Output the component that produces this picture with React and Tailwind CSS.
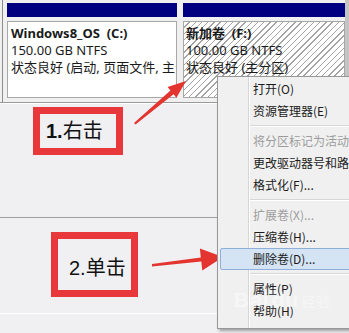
import React from 'react';

const menuItems = [
    { label: '打开(O)' },
    { label: '资源管理器(E)' },
    { sep: true },
    { label: '将分区标记为活动分区(M)', disabled: true },
    { label: '更改驱动器号和路径(C)...' },
    { label: '格式化(F)...' },
    { sep: true },
    { label: '扩展卷(X)...', disabled: true },
    { label: '压缩卷(H)...' },
    { label: '删除卷(D)...', active: true },
    { sep: true },
    { label: '属性(P)' },
    { label: '帮助(H)' },
];

const Partition = ({ outer, inner, title, size, status }) => (
    <div className={`flex flex-col pt-[3px] ${outer}`}>
        <div className="h-[14px] bg-[#000080]" />
        <div className="flex-1 pt-[4px] pb-[4px]">
            <div className={`h-full border border-[#a8a8a8] overflow-hidden whitespace-nowrap text-[13px] leading-[17px] text-[#1a1a1a] pt-[3px] ${inner}`}>
                <div className="font-bold">{title}</div>
                <div>{size}</div>
                <div>{status}</div>
            </div>
        </div>
    </div>
);

const Arrows = () => (
    <svg className="absolute inset-0 pointer-events-none" width="349" height="333" viewBox="0 0 349 333">
        <polygon
            fill="#e3342f"
            points="134,123 170.4,90.4 167.6,86.9 186,81 176.4,97.8 173.6,94.2 135.5,124.5"
        />
        <polygon
            fill="#e3342f"
            points="152,264 200.8,257.5 199.9,248.6 223,257 202.3,270.4 201.3,261.5 152,266.5"
        />
    </svg>
);

export default function App() {
    return (
        <div
            className="relative w-[349px] h-[333px] overflow-hidden bg-[#f0eff2]"
            style={{ fontFamily: '"Noto Sans", "Noto Sans CJK SC", sans-serif' }}
        >
            {/* disk row */}
            <div className="flex h-[103px] bg-[#f0f0f0] border-b border-[#9a9a9a]">
                <div className="w-[3px] border-r border-[#8c8c8c]" />
                <Partition
                    outer="w-[174px] pl-[4px]"
                    inner="bg-white pl-[3px]"
                    title={'Windows8_OS\u00a0\u00a0(C:)'}
                    size="150.00 GB NTFS"
                    status="状态良好 (启动, 页面文件, 主分区)"
                />
                <div className="w-[3px]" />
                <Partition
                    outer="w-[165px] pl-[3px]"
                    inner="bg-[image:repeating-linear-gradient(135deg,#ffffff_0px,#ffffff_3.4px,#a4a4a4_3.4px,#a4a4a4_4.4px)] pl-[2px]"
                    title={'新加卷\u00a0\u00a0(F:)'}
                    size="100.00 GB NTFS"
                    status="状态良好 (主分区)"
                />
                <div className="flex-1 bg-[#c4c4c4]" />
            </div>

            {/* lower area */}
            <div className="border-t border-white" style={{ fontFamily: '"Liberation Sans", "Noto Sans CJK SC", sans-serif' }}>
                <div className="h-[114px] pt-[3px] pl-[33px] border-b border-[#a0a0a0]">
                    <div className="w-[90px] h-[48px] border-[7px] border-[#e8383b] flex items-center pl-[6px] text-[20px] text-[#111]">
                        <span className="font-bold">1.</span>
                        <span>右击</span>
                    </div>
                </div>
                <div className="h-[96px] pt-[14px] pl-[51px] border-b border-white">
                    <div className="w-[87px] h-[65px] border-[7px] border-[#e8383b] flex items-center pl-[11px] pt-[6px] text-[20px] text-[#111]">
                        <span>2.</span>
                        <span>单击</span>
                    </div>
                </div>
            </div>

            <Arrows />

            {/* context menu */}
            <div
                className="absolute left-[217px] top-[76px] w-[190px] bg-[#f0f0f0] border border-[#979797] shadow-[2px_2px_3px_rgba(0,0,0,0.35)] pt-[1px] pb-[6px] text-[12px] whitespace-nowrap"
                style={{ fontFamily: '"Noto Sans CJK SC", "Noto Sans", sans-serif' }}
            >
                <div className="absolute left-[30px] top-0 bottom-0 w-[2px] border-l border-[#d6d6d6] bg-white" />
                {menuItems.map((item, i) =>
                    item.sep ? (
                        <div key={i} className="h-[8px] flex items-center pl-[32px]">
                            <div className="w-full h-[2px] border-t border-[#d6d6d6] bg-white" />
                        </div>
                    ) : (
                        <div key={i} className="relative h-[22px] px-[2px]">
                            <div
                                className={`h-full flex items-center pl-[32px] rounded-[2px] border ${
                                    item.active ? 'bg-[#d5e4f4] border-[#8fb0da]' : 'border-transparent'
                                } ${item.disabled ? 'text-[#9d9d9d]' : 'text-[#1b1b1b]'}`}
                            >
                                {item.label}
                            </div>
                        </div>
                    )
                )}
                <div className="absolute left-[16px] top-[212px] text-[21px] leading-[22px] font-bold text-white/45 tracking-[1px]" style={{ fontFamily: '"Liberation Sans", sans-serif' }}>
                    Bai<span className="px-[2px]">du</span>
                    <span className="text-[14px] font-normal" style={{ fontFamily: '"Noto Sans CJK SC", sans-serif' }}>经验</span>
                </div>
            </div>
        </div>
    );
}
